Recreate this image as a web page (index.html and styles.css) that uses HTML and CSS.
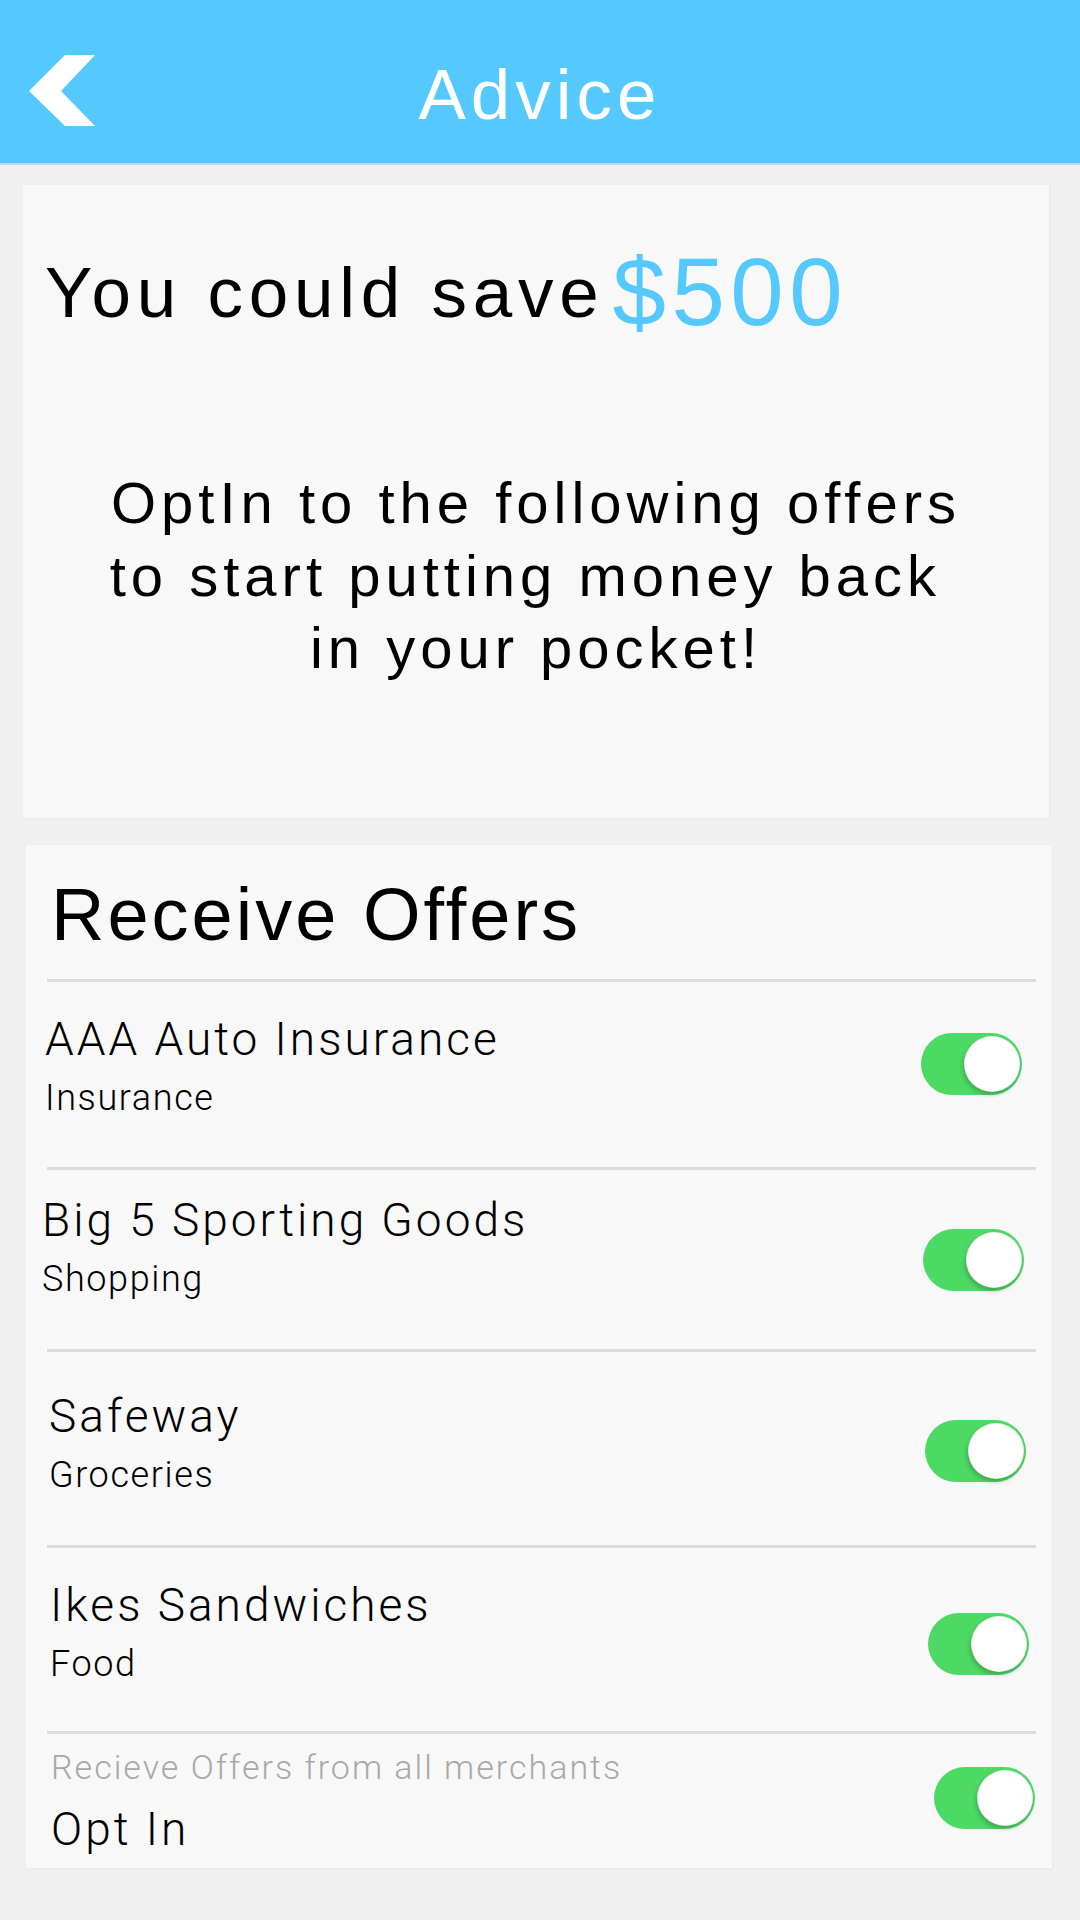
FILE: index.html
```html
<!DOCTYPE html>
<html>
<head>
<meta charset="utf-8">
<link rel="stylesheet" href="styles.css">
</head>
<body>
<header class="topbar">
  <div class="back">
    <svg width="66" height="72" viewBox="0 0 66 72"><polygon points="36,0 66,0 32,36 66,71 36,71 0,36" fill="#ffffff"/></svg>
  </div>
  <h1 class="title">Advice</h1>
  <div class="spacer"></div>
</header>

<main class="page">
  <section class="card card-save">
    <div class="save"><span class="save-text">You could save</span><span class="amount">$500</span></div>
    <p class="pitch">OptIn to the following offers<br>to start putting money back&nbsp;<br>in your pocket!</p>
  </section>

  <section class="card card-offers">
    <h2 class="offers-title">Receive Offers</h2>
    <div class="divider"></div>
    <div class="row row-1">
      <div class="row-text">
        <div class="row-name">AAA Auto Insurance</div>
        <div class="row-cat">Insurance</div>
      </div>
      <div class="toggle"><span class="knob"></span></div>
    </div>
    <div class="divider"></div>
    <div class="row row-2">
      <div class="row-text">
        <div class="row-name">Big 5 Sporting Goods</div>
        <div class="row-cat">Shopping</div>
      </div>
      <div class="toggle"><span class="knob"></span></div>
    </div>
    <div class="divider"></div>
    <div class="row row-3">
      <div class="row-text">
        <div class="row-name">Safeway</div>
        <div class="row-cat">Groceries</div>
      </div>
      <div class="toggle"><span class="knob"></span></div>
    </div>
    <div class="divider"></div>
    <div class="row row-4">
      <div class="row-text">
        <div class="row-name">Ikes Sandwiches</div>
        <div class="row-cat">Food</div>
      </div>
      <div class="toggle"><span class="knob"></span></div>
    </div>
    <div class="divider"></div>
    <div class="row row-all">
      <div class="row-text">
        <div class="row-hint">Recieve Offers from all merchants</div>
        <div class="row-name row-optin">Opt In</div>
      </div>
      <div class="toggle"><span class="knob"></span></div>
    </div>
  </section>
</main>
</body>
</html>
```

FILE: styles.css
```css
* { box-sizing: border-box; }

html, body {
  margin: 0;
  padding: 0;
}

body {
  width: 1080px;
  height: 1920px;
  background: #f0f0f0;
  font-family: "Liberation Sans", Arial, sans-serif;
  color: #000;
  overflow: hidden;
}

.topbar {
  height: 165px;
  background: #55c8fd;
  border-bottom: 2px solid #b4dcf2;
  display: grid;
  grid-template-columns: 1fr auto 1fr;
  align-items: start;
  padding-top: 55px;
}

.back {
  padding-left: 29px;
  height: 72px;
}

.back svg { display: block; }

.title {
  margin: 4px 0 0 0;
  font-weight: normal;
  font-size: 71px;
  line-height: 71px;
  letter-spacing: 5px;
  color: #ffffff;
}

.page {
  padding-top: 20px;
}

.card {
  width: 1026px;
  background: #f8f8f8;
  box-shadow: 1px 1px 2px rgba(0,0,0,0.04);
}

.card-save {
  margin-left: 23px;
  height: 633px;
  padding: 57px 22px 0 22px;
}

.save {
  height: 101px;
  line-height: 100px;
  white-space: nowrap;
}

.save-text {
  font-size: 71px;
  letter-spacing: 5.75px;
}

.amount {
  font-size: 96px;
  line-height: 100px;
  letter-spacing: 5.5px;
  color: #55c8fd;
  margin-left: 8px;
  vertical-align: -8px;
}

.pitch {
  margin: 124px 0 0 0;
  text-align: center;
  font-size: 58px;
  line-height: 72.5px;
  letter-spacing: 5px;
}

.card-offers {
  margin-left: 26px;
  margin-top: 27px;
  height: 1023px;
  padding-top: 25px;
}

.offers-title {
  margin: 0 0 19px 0;
  padding-left: 25px;
  font-weight: normal;
  font-size: 74px;
  line-height: 90px;
  letter-spacing: 3px;
}

.divider {
  height: 3px;
  margin: 0 16px 0 21px;
  background: #dcdcdc;
}

.row {
  display: flex;
  align-items: flex-start;
  justify-content: space-between;
}

.row-1 { height: 185px; padding: 30px 30px 0 19px; }
.row-1 .toggle { margin-top: 21px; }

.row-2 { height: 179px; padding: 23px 28px 0 16px; }
.row-2 .toggle { margin-top: 36px; }

.row-3 { height: 193px; padding: 37px 26px 0 23px; }
.row-3 .toggle { margin-top: 31px; }

.row-4 { height: 183px; padding: 30px 23px 0 24px; }
.row-4 .toggle { margin-top: 35px; }

.row-all { height: 134px; padding: 13px 17px 0 25px; }
.row-all .toggle { margin-top: 20px; }

.row-text {
  display: flex;
  flex-direction: column;
  font-family: Roboto, "Liberation Sans", sans-serif;
  font-weight: 300;
}

.row-name {
  font-size: 46px;
  line-height: 54px;
  letter-spacing: 3px;
}

.row-cat {
  margin-top: 8px;
  font-size: 36px;
  line-height: 48px;
  letter-spacing: 1.6px;
}

.row-hint {
  font-size: 34px;
  line-height: 40px;
  letter-spacing: 2px;
  color: #a8a8a8;
}

.row-optin {
  margin-top: 15px;
}

.toggle {
  position: relative;
  width: 101px;
  height: 62px;
  border-radius: 31px;
  background: #4cd964;
  flex: none;
}

.knob {
  position: absolute;
  right: 2px;
  top: 3px;
  width: 56px;
  height: 56px;
  border-radius: 50%;
  background: #ffffff;
  border: 1px solid rgba(0,0,0,0.06);
  box-shadow: -1px 3px 4px rgba(0,0,0,0.22);
}
```
